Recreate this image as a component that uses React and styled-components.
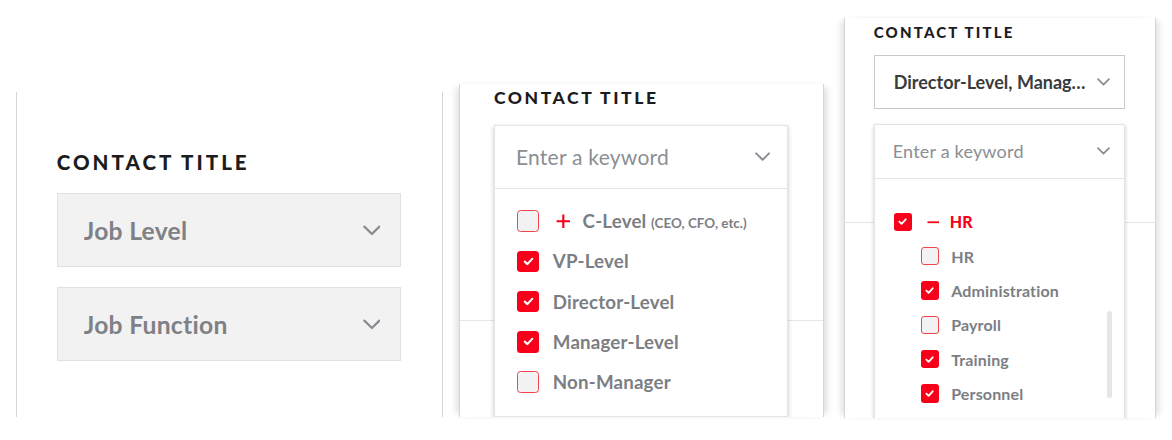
import React from 'react';
import styled, { createGlobalStyle, ThemeProvider } from 'styled-components';

const u = (n) => ({ theme }) => `${+(n * theme.s).toFixed(2)}px`;
const RED = '#f8001a';

const Global = createGlobalStyle`
  html, body { margin: 0; padding: 0; background: #fff; }
  body { font-family: Lato, "Open Sans", sans-serif; -webkit-font-smoothing: antialiased; }
  * { box-sizing: border-box; }
`;

const Page = styled.div`
  width: 1172px;
  height: 440px;
  display: flex;
  align-items: flex-start;
  overflow: hidden;
  background: #fff;
`;

const Frame = styled.div`
  flex: none;
  margin-left: ${(p) => p.$ml}px;
  margin-top: ${(p) => p.$mt}px;
  width: ${({ theme }) => 310 * theme.s + 2}px;
  height: ${(p) => p.$h}px;
  border-left: 1px solid #d6d6d6;
  border-right: 1px solid #d6d6d6;
  background: #fff;
  overflow: hidden;
  box-shadow: ${(p) =>
    p.$shadow
      ? '-6px 0 6px -3px rgba(0,0,0,0.12), 6px 0 6px -3px rgba(0,0,0,0.12)'
      : 'none'};
`;

const Section = styled.section`
  padding-top: ${({ theme, $pt }) => $pt * theme.s}px;
  padding-left: ${u(29)};
  padding-right: ${u(30)};
  padding-bottom: ${u(44.5)};
  border-bottom: 1px solid #e6e6e6;
`;

const Title = styled.h3`
  margin: 0;
  font-family: Lato, sans-serif;
  font-weight: 900;
  font-size: ${u(15)};
  line-height: ${u(15)};
  letter-spacing: ${u(2.2)};
  color: #1c1c1e;
  text-transform: uppercase;
`;

const Fields = styled.div`
  margin-top: ${u(15.5)};
  display: flex;
  flex-direction: column;
  gap: ${u(14.6)};
`;

const Slot = styled.div`
  position: relative;
  width: ${u(251)};
  height: ${u(54)};
  z-index: ${(p) => (p.$open ? 2 : 1)};
`;

const SelectBox = styled.div`
  height: 100%;
  display: flex;
  align-items: center;
  gap: ${u(3)};
  padding: 0 ${u(14)} 0 ${u(19)};
  border: 1px solid ${(p) => (p.$filled ? '#c9c9c9' : '#e1e1e1')};
  background: ${(p) => (p.$filled ? '#fff' : '#f2f2f2')};
`;

const SelectText = styled.span`
  flex: 1;
  min-width: 0;
  white-space: nowrap;
  overflow: hidden;
  text-overflow: ellipsis;
  font-size: ${u(18)};
  font-weight: 700;
  letter-spacing: ${(p) => (p.$filled ? '0px' : u(0.2))};
  color: ${(p) => (p.$filled ? '#3a3b3d' : '#7e8186')};
`;

const ChevronSvg = styled.svg`
  flex: none;
  width: ${u(13)};
  height: ${u(8)};
`;

const Chevron = () => (
  <ChevronSvg viewBox="0 0 13 8">
    <path d="M1 1.2 L6.5 6.6 L12 1.2" fill="none" stroke="#8a8d92" strokeWidth="1.7" strokeLinecap="round" strokeLinejoin="round" />
  </ChevronSvg>
);

const Menu = styled.div`
  position: absolute;
  top: 0;
  left: 0;
  width: 100%;
  background: #fff;
  border: 1px solid #e4e4e4;
  box-shadow: 0 ${u(2)} ${u(4)} rgba(0, 0, 0, 0.22);
`;

const MenuHead = styled.div`
  height: ${u(54)};
  display: flex;
  align-items: center;
  padding: 0 ${u(14)} 0 ${u(18)};
  border-bottom: 1px solid #e4e4e4;
`;

const Placeholder = styled.span`
  flex: 1;
  font-size: ${u(18)};
  font-weight: 400;
  letter-spacing: ${u(0.2)};
  color: #8b8e93;
`;

const List = styled.div`
  position: relative;
  padding-top: ${({ theme, $pt }) => $pt * theme.s}px;
  padding-bottom: ${u(12)};
  padding-left: ${u(19)};
`;

const Row = styled.div`
  height: ${u(34.35)};
  display: flex;
  align-items: center;
  padding-left: ${({ theme, $child }) => ($child ? 27 * theme.s : 0)}px;
`;

const Box = styled.span`
  flex: none;
  width: ${u(18.5)};
  height: ${u(18.5)};
  border-radius: ${u(3)};
  display: flex;
  align-items: center;
  justify-content: center;
  background: ${(p) => (p.$on ? RED : '#f2f2f2')};
  border: ${({ $on, theme }) => ($on ? 'none' : `${1.3 * theme.s}px solid #f2444d`)};
`;

const CheckSvg = styled.svg`
  width: ${u(11)};
  height: ${u(11)};
`;

const ToggleSvg = styled.svg`
  flex: none;
  margin-left: ${u(15)};
  width: ${u(12.5)};
  height: ${u(12.5)};
`;

const Label = styled.span`
  margin-left: ${(p) => (p.$afterToggle ? u(10) : u(12))};
  white-space: nowrap;
  font-size: ${u(16)};
  font-weight: ${(p) => (p.$parent ? 900 : 700)};
  letter-spacing: ${u(0.15)};
  color: ${(p) => (p.$parent ? RED : '#7b7e83')};
`;

const Note = styled.span`
  margin-left: ${u(4)};
  font-size: ${u(11.5)};
  font-weight: 700;
  letter-spacing: 0;
`;

const Thumb = styled.div`
  position: absolute;
  right: ${u(12)};
  top: ${u(132)};
  width: ${u(5)};
  height: ${u(87)};
  border-radius: ${u(3)};
  background: #e6e6e6;
`;

const Check = ({ on }) => (
  <Box $on={on}>
    {on && (
      <CheckSvg viewBox="0 0 12 12">
        <path d="M2.6 6.2 L5 8.5 L9.5 3.6" fill="none" stroke="#fff" strokeWidth="2" strokeLinecap="round" strokeLinejoin="round" />
      </CheckSvg>
    )}
  </Box>
);

const Toggle = ({ open }) => (
  <ToggleSvg viewBox="0 0 12.5 12.5">
    {open ? (
      <path d="M0.5 6.25 H12" stroke={RED} strokeWidth="1.8" />
    ) : (
      <path d="M6.25 0.5 V12 M0.5 6.25 H12" stroke={RED} strokeWidth="1.8" />
    )}
  </ToggleSvg>
);

const Item = ({ item }) => (
  <Row $child={item.child}>
    <Check on={item.on} />
    {item.toggle && <Toggle open={item.toggle === 'open'} />}
    <Label $parent={item.parent} $afterToggle={!!item.toggle}>
      {item.label}
      {item.note && <Note>{item.note}</Note>}
    </Label>
  </Row>
);

const Field = ({ field }) => {
  if (field.open) {
    return (
      <Slot $open>
        <Menu>
          <MenuHead>
            <Placeholder>Enter a keyword</Placeholder>
            <Chevron />
          </MenuHead>
          <List $pt={field.listTop}>
            {field.items.map((it, i) => (
              <Item key={i} item={it} />
            ))}
            {field.scroll && <Thumb />}
          </List>
        </Menu>
      </Slot>
    );
  }
  return (
    <Slot>
      <SelectBox $filled={!!field.value}>
        <SelectText $filled={!!field.value}>{field.value || field.placeholder}</SelectText>
        <Chevron />
      </SelectBox>
    </Slot>
  );
};

const levelItems = [
  { label: 'C-Level', note: '(CEO, CFO, etc.)', toggle: 'closed', on: false },
  { label: 'VP-Level', on: true },
  { label: 'Director-Level', on: true },
  { label: 'Manager-Level', on: true },
  { label: 'Non-Manager', on: false },
];

const functionItems = [
  { label: 'HR', parent: true, toggle: 'open', on: true },
  { label: 'HR', child: true, on: false },
  { label: 'Administration', child: true, on: true },
  { label: 'Payroll', child: true, on: false },
  { label: 'Training', child: true, on: true },
  { label: 'Personnel', child: true, on: true },
];

const panels = [
  {
    s: 1.37, ml: 16, mt: 92, h: 325, pt: 43.5, shadow: false,
    fields: [
      { placeholder: 'Job Level' },
      { placeholder: 'Job Function' },
    ],
  },
  {
    s: 1.17, ml: 16.3, mt: 84, h: 333, pt: 4.3, shadow: true,
    fields: [
      { open: true, listTop: 10.5, items: levelItems },
      { placeholder: 'Job Function' },
    ],
  },
  {
    s: 1, ml: 20, mt: 18, h: 400, pt: 6.5, shadow: true,
    fields: [
      { placeholder: 'Job Level', value: 'Director-Level, Manager-Level, VP-Level' },
      { open: true, listTop: 26, items: functionItems, scroll: true },
    ],
  },
];

export default function App() {
  return (
    <>
      <Global />
      <Page>
        {panels.map((p, i) => (
          <ThemeProvider key={i} theme={{ s: p.s }}>
            <Frame $ml={p.ml} $mt={p.mt} $h={p.h} $shadow={p.shadow}>
              <Section $pt={p.pt}>
                <Title>Contact Title</Title>
                <Fields>
                  {p.fields.map((f, j) => (
                    <Field key={j} field={f} />
                  ))}
                </Fields>
              </Section>
            </Frame>
          </ThemeProvider>
        ))}
      </Page>
    </>
  );
}
